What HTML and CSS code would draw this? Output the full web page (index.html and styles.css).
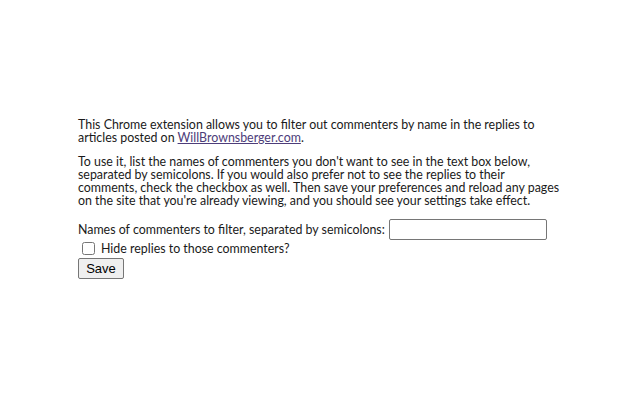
FILE: index.html
```html
<!DOCTYPE html>
<html>
<head>
<meta charset="utf-8">
<link rel="stylesheet" href="styles.css">
</head>
<body>
<main class="options">
  <p class="intro">This Chrome extension allows you to filter out commenters by name in the replies to articles posted on <a href="#" class="site-link">WillBrownsberger.com</a>.</p>
  <p class="intro">To use it, list the names of commenters you don't want to see in the text box below, separated by semicolons. If you would also prefer not to see the replies to their comments, check the checkbox as well. Then save your preferences and reload any pages on the site that you're already viewing, and you should see your settings take effect.</p>
  <div class="field-row">
    <label for="names" class="field-label">Names of commenters to filter, separated by semicolons:</label>
    <input id="names" type="text" class="names-input">
  </div>
  <div class="check-row">
    <input id="hide" type="checkbox" class="hide-check">
    <label for="hide" class="check-label">Hide replies to those commenters?</label>
  </div>
  <button class="save-btn">Save</button>
</main>
</body>
</html>
```
FILE: styles.css
```css
html, body {
  margin: 0;
  padding: 0;
  background: #ffffff;
}
body {
  font-family: Lato, "Open Sans", sans-serif;
  font-size: 12.4px;
  line-height: 13px;
  color: #1a1a1a;
}
.options {
  width: 482px;
  padding: 118px 0 0 78px;
}
.intro {
  margin: 0 0 11px 0;
}
.site-link {
  color: #4d3d7a;
  text-decoration: underline;
}
.field-row {
  display: flex;
  align-items: center;
  white-space: nowrap;
  margin-top: 12px;
}
.field-label {
  margin-right: 4px;
}
.names-input {
  width: 152px;
  height: 17px;
  margin: 0;
  padding: 1px 2px;
  border: 1px solid #767676;
  border-radius: 2px;
  flex: none;
}
.check-row {
  display: flex;
  align-items: center;
  margin-top: 2px;
}
.hide-check {
  width: 13px;
  height: 13px;
  margin: 0 6px 0 4px;
}
.save-btn {
  display: block;
  margin-top: 3px;
  width: 46px;
  height: 21px;
  padding: 0;
  font-family: "Liberation Sans", Arial, sans-serif;
  font-size: 13px;
  color: #000;
  background: #efefef;
  border: 1px solid #767676;
  border-radius: 2px;
}
```
